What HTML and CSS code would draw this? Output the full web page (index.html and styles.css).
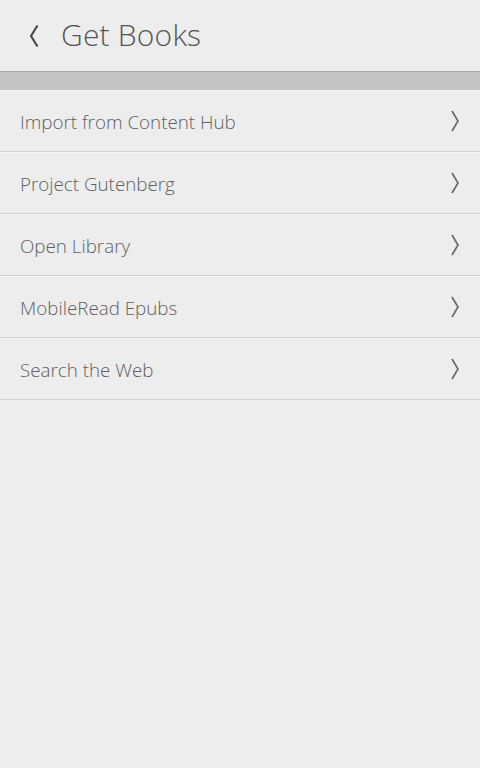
FILE: index.html
```html
<!DOCTYPE html>
<html lang="en">
<head>
<meta charset="utf-8">
<title>Get Books</title>
<link rel="stylesheet" href="styles.css">
</head>
<body>
<div class="app">
  <header class="header">
    <button class="back" aria-label="Back">
      <svg width="14" height="26" viewBox="0 0 14 26"><path d="M10.5 2.5 L4 13 L10.5 23.5" fill="none" stroke="#4a4a4a" stroke-width="2.2" stroke-linejoin="miter"/></svg>
    </button>
    <h1 class="title">Get Books</h1>
  </header>
  <div class="band"></div>
  <ul class="list">
    <li class="item"><span class="label">Import from Content Hub</span><svg class="chev" width="12" height="24" viewBox="0 0 12 24"><path d="M3 2 L9 12 L3 22" fill="none" stroke="#6a6a6a" stroke-width="1.7"/></svg></li>
    <li class="item"><span class="label">Project Gutenberg</span><svg class="chev" width="12" height="24" viewBox="0 0 12 24"><path d="M3 2 L9 12 L3 22" fill="none" stroke="#6a6a6a" stroke-width="1.7"/></svg></li>
    <li class="item"><span class="label">Open Library</span><svg class="chev" width="12" height="24" viewBox="0 0 12 24"><path d="M3 2 L9 12 L3 22" fill="none" stroke="#6a6a6a" stroke-width="1.7"/></svg></li>
    <li class="item"><span class="label">MobileRead Epubs</span><svg class="chev" width="12" height="24" viewBox="0 0 12 24"><path d="M3 2 L9 12 L3 22" fill="none" stroke="#6a6a6a" stroke-width="1.7"/></svg></li>
    <li class="item"><span class="label">Search the Web</span><svg class="chev" width="12" height="24" viewBox="0 0 12 24"><path d="M3 2 L9 12 L3 22" fill="none" stroke="#6a6a6a" stroke-width="1.7"/></svg></li>
  </ul>
</div>
</body>
</html>
```
FILE: styles.css
```css
html, body {
  margin: 0;
  padding: 0;
  background: #ededed;
}
body {
  font-family: "Open Sans", "Noto Sans", sans-serif;
  color: #5d5d5d;
  width: 480px;
  height: 768px;
  overflow: hidden;
}
.header {
  display: flex;
  align-items: center;
  border-bottom: 1px solid #a9a9a9;
  box-sizing: border-box;
  height: 72px;
}
.back {
  background: none;
  border: 0;
  padding: 0;
  margin: 0 0 0 27px;
  width: 14px;
  height: 26px;
  display: flex;
  align-items: center;
}
.title {
  margin: 0 0 0 20px;
  font-size: 30px;
  font-weight: 300;
  color: #555;
  letter-spacing: 0.2px;
  position: relative;
  top: -1px;
}
.band {
  height: 18px;
  background: #c3c3c3;
}
.list {
  list-style: none;
  margin: 0;
  padding: 0;
}
.item {
  height: 62px;
  box-sizing: border-box;
  display: flex;
  align-items: center;
  justify-content: space-between;
  padding: 0 21px 0 20px;
  border-top: 1px solid #f6f6f6;
  border-bottom: 1px solid #d3d3d3;
}
.label {
  font-size: 18.8px;
  font-weight: 300;
  color: #5f5f5f;
  position: relative;
  top: 1px;
}
.chev {
  margin-right: -2px;
}
```
